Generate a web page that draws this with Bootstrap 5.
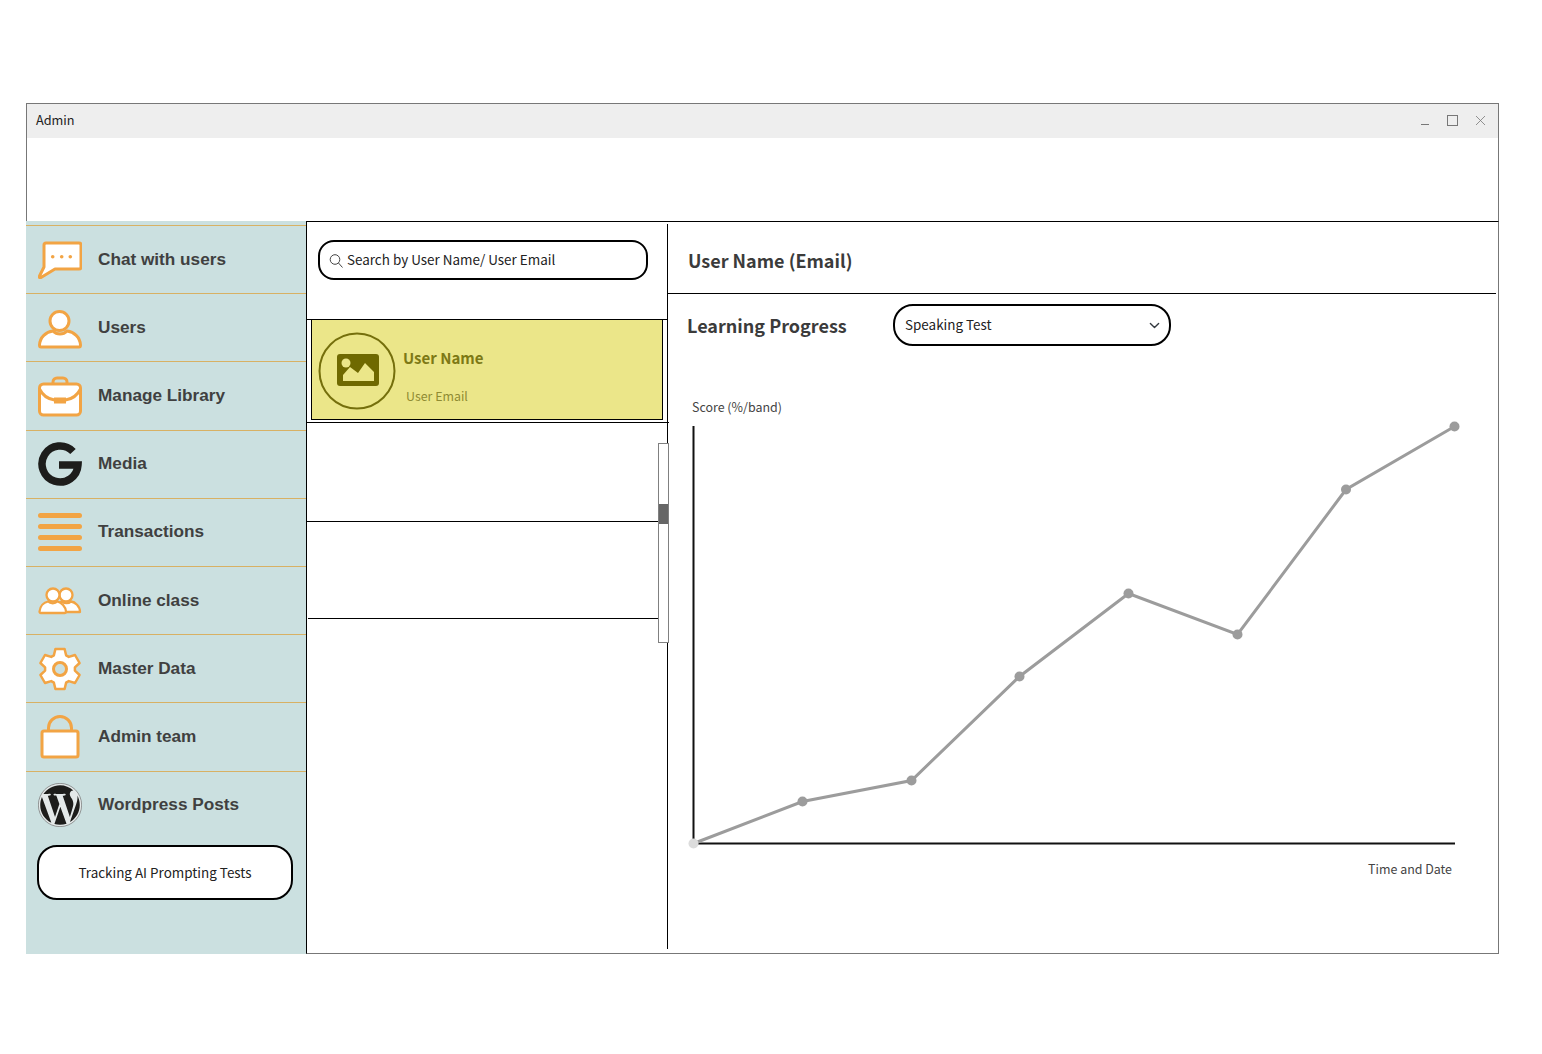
<!DOCTYPE html>
<html lang="en">
<head>
	<meta charset="UTF-8" />
	<meta name="viewport" content="width=device-width, initial-scale=1.0" />
	<title>Admin</title>
	<link href="https://cdn.jsdelivr.net/npm/bootstrap@5.3.3/dist/css/bootstrap.min.css" rel="stylesheet" />
	<script src="https://cdn.jsdelivr.net/npm/bootstrap@5.3.3/dist/js/bootstrap.bundle.min.js"></script>

	<style>
		body {
			background: #fff;
			font-family: "Noto Sans CJK SC", "Noto Sans", sans-serif;
			color: #222;
		}

		.app-window {
			width: 1473px;
			margin: 103px 0 0 26px;
		}

		.win-top {
			height: 118px;
			border: 1px solid #777;
			border-bottom: 0;
		}

		.win-title {
			height: 34px;
			background: #eeeeee;
			padding: 0 8px 2px 9px;
			font-size: 12.7px;
			color: #222;
		}

		.win-btns svg {
			display: block;
			margin-top: 2px;
		}

		.win-main {
			height: 733px;
		}

		/* sidebar */
		.side-col {
			width: 280px;
			flex: none;
			background: #cbe0e0;
			padding-top: 4px;
		}

		.side-col .list-group-item {
			height: 68.2px;
			background: transparent;
			border: 0;
			border-top: 1.5px solid #d8b164;
			border-radius: 0;
			padding: 0 0 0 12px;
			gap: 16px;
			font-family: "Liberation Sans", Arial, sans-serif;
			font-weight: 700;
			font-size: 17.2px;
			color: #404040;
		}

		.side-icon {
			width: 44px;
			height: 44px;
			flex: none;
		}

		.track-btn {
			display: block;
			width: 256px;
			height: 55px;
			margin: 6px 0 0 11px;
			background: #fff;
			border: 2px solid #000;
			border-radius: 20px;
			font-size: 13.45px;
			color: #222;
		}

		/* content frame */
		.content-frame {
			border-top: 1px solid #000;
			border-left: 1px solid #000;
			border-right: 1px solid #777;
			border-bottom: 1px solid #777;
		}

		/* user list */
		.user-col {
			width: 361px;
			flex: none;
			margin: 2px 0 4px;
			border-right: 1px solid #000;
		}

		.search-wrap {
			height: 96px;
			padding: 16px 0 0 11px;
			border-bottom: 1px solid #000;
			margin-right: -1px;
		}

		.search-box {
			width: 330px;
			height: 40px;
			border: 2px solid #000;
			border-radius: 16px;
			padding-left: 9px;
			gap: 4px;
			font-size: 13.45px;
			color: #222;
		}

		.search-text {
			margin-top: -2px;
		}

		.user-active {
			width: 352px;
			height: 100px;
			margin-left: 4px;
			background: #ebe689;
			border: 1px solid #000;
			border-top: 0;
			padding-left: 6px;
			color: #7d7915;
		}

		.avatar-ring {
			width: 78px;
			height: 78px;
			flex: none;
			margin-top: 2px;
		}

		.user-name {
			font-size: 15px;
			font-weight: 700;
			margin: 11px 0 0 7px;
			line-height: 24px;
		}

		.user-mail {
			font-size: 12.4px;
			margin: 17px 0 0 10px;
			line-height: 18px;
			color: #8f8b32;
		}

		.user-row {
			border-bottom: 1px solid #000;
		}

		.user-row-first {
			height: 100px;
			margin: 2px -2px 0 -1px;
			border-top: 1px solid #000;
		}

		.user-row-second {
			height: 97px;
			margin: 0 0 0 1px;
		}

		.list-scroll {
			position: absolute;
			top: 219px;
			right: -2px;
			width: 11px;
			height: 200px;
			background: #fff;
			border: 1px solid #808080;
		}

		.list-scroll-thumb {
			height: 20px;
			margin-top: 60px;
			background: #666;
		}

		/* detail panel */
		.detail-head {
			height: 72px;
			margin-right: 2px;
			padding: 6px 0 0 20px;
			border-bottom: 1px solid #000;
			font-size: 18px;
			font-weight: 700;
			color: #3b3b3b;
		}

		.progress-row {
			padding: 10px 0 0 19px;
		}

		.progress-title {
			width: 206px;
			font-size: 18px;
			font-weight: 700;
			color: #3b3b3b;
			line-height: 24px;
			padding-top: 9px;
		}

		.test-select {
			width: 278px;
			height: 42px;
			border: 2px solid #000;
			border-radius: 20px;
			padding: 0 36px 2px 10px;
			font-size: 13.45px;
			color: #222;
			background-size: 11px 11px;
			background-position: right 9.5px center;
		}

		.chart-svg {
			display: block;
			margin-top: 44px;
		}

		.chart-svg text {
			font-family: "Noto Sans CJK SC", "Noto Sans", sans-serif;
			font-size: 12.45px;
			fill: #444;
		}
	</style>
</head>
<body>

	<div class="app-window">

		<div class="win-top">
			<div class="win-title d-flex align-items-center justify-content-between">
				<span>Admin</span>
				<div class="win-btns d-flex align-items-center">
					<svg width="70" height="14" viewBox="0 0 70 14" fill="none" stroke="#777">
						<path d="M1 10.5h8" />
						<rect x="27.5" y="1.5" width="10" height="10" />
						<path d="M56 2l9 9M65 2l-9 9" stroke-width=".8" />
					</svg>
				</div>
			</div>
		</div>

		<div class="win-main d-flex">

			<div class="side-col">
				<div class="list-group">
					<a class="list-group-item d-flex align-items-center">
						<svg class="side-icon" viewBox="0 0 44 44" fill="#fff" stroke="#f2a444" stroke-width="3" stroke-linejoin="round">
							<path d="M8 5h33a2 2 0 0 1 2 2v22a2 2 0 0 1-2 2H17L3 39.500Q.5 40 1.500 38L6 29V7a2 2 0 0 1 2-2z" />
							<g fill="#f2a444" stroke="none"><circle cx="14.700" cy="18.700" r="1.800" /><circle cx="23.700" cy="18.700" r="1.800" /><circle cx="32.300" cy="18.700" r="1.800" /></g>
						</svg>
						Chat with users
					</a>
					<a class="list-group-item d-flex align-items-center">
						<svg class="side-icon" viewBox="0 0 44 44" fill="#fff" stroke="#f2a444" stroke-width="3" stroke-linejoin="round">
							<path d="M3 41q-1.500 0-1.500-2C2 31 8 26 15 25a9.500 9.500 0 0 0 14 0c7 1 13 6 13.500 14 0 1.500-.5 2-1.500 2z" />
							<circle cx="21.500" cy="15" r="9.500" />
						</svg>
						Users
					</a>
					<a class="list-group-item d-flex align-items-center">
						<svg class="side-icon" viewBox="0 0 44 44" fill="#fff" stroke="#f2a444" stroke-width="3" stroke-linejoin="round">
							<path d="M15 10V8a4 4 0 0 1 4-4h6a4 4 0 0 1 4 4v2" fill="none" />
							<rect x="1.500" y="10" width="41" height="31" rx="4" />
							<path d="M1.500 15c3 6 8 10 15 11h11c7-1 12-5 15-11" fill="none" />
							<rect x="16" y="23.500" width="12" height="6" fill="#f2a444" stroke="none" />
						</svg>
						Manage Library
					</a>
					<a class="list-group-item d-flex align-items-center">
						<svg class="side-icon" viewBox="0 0 44 44" fill="none" stroke="#1d1d1b" stroke-width="7.500">
							<path d="M35 9.500A18 18 0 1 0 40 23H21" />
						</svg>
						Media
					</a>
					<a class="list-group-item d-flex align-items-center">
						<svg class="side-icon" viewBox="0 0 44 44" fill="none" stroke="#f2a444" stroke-width="5" stroke-linecap="round">
							<path d="M2.500 5.500h39M2.500 16.500h39M2.500 27.500h39M2.500 38.500h39" />
						</svg>
						Transactions
					</a>
					<a class="list-group-item d-flex align-items-center">
						<svg class="side-icon" viewBox="0 0 44 44" fill="#fff" stroke="#f2a444" stroke-width="2.300" stroke-linejoin="round">
							<circle cx="28" cy="16" r="6.500" />
							<path d="M20 33h22c0-6-5-10-9-10.500a7 7 0 0 1-9 0c-1.500.5-3 1-4 2z" />
							<path d="M3 34q-1.500 0-1.500-1.500C2 27 6 23.500 10 22.500a7 7 0 0 0 9.500 0c4 1 8 5 8.500 10 0 1-.5 1.500-1.500 1.500z" />
							<circle cx="15" cy="16" r="6.500" />
						</svg>
						Online class
					</a>
					<a class="list-group-item d-flex align-items-center">
						<svg class="side-icon" viewBox="0 0 44 44" fill="#fff" stroke="#f2a444" stroke-width="2.500" stroke-linejoin="round">
							<path d="M15.900 8.300L17.400 2H26.600L28.100 8.300L30.800 9.900L37 8L41.600 16L36.900 20.400V23.600L41.600 28L37 36L30.800 34.100L28.100 35.700L26.600 42H17.400L15.900 35.700L13.200 34.100L7 36L2.400 28L7.100 23.600V20.400L2.400 16L7 8L13.200 9.900z" />
							<circle cx="22" cy="22" r="6.500" fill="#cbe0e0" stroke-width="3" />
						</svg>
						Master Data
					</a>
					<a class="list-group-item d-flex align-items-center">
						<svg class="side-icon" viewBox="0 0 44 44" fill="#fff" stroke="#f2a444" stroke-width="3" stroke-linejoin="round">
							<path d="M10.500 16V13a11.500 11.500 0 0 1 23 0v3" fill="none" />
							<rect x="4" y="16" width="36" height="26" rx="2" />
						</svg>
						Admin team
					</a>
					<a class="list-group-item d-flex align-items-center">
						<svg class="side-icon" viewBox="0 0 24 24">
							<circle cx="12" cy="12" r="11.800" fill="#e4e9e9" stroke="#777" stroke-width=".4" />
							<path fill="#1d1d1b" d="M21.469 6.825c.84 1.537 1.318 3.3 1.318 5.175 0 3.979-2.156 7.456-5.363 9.325l3.295-9.527c.615-1.54.82-2.771.82-3.864 0-.405-.026-.78-.07-1.11m-7.981.105c.647-.03 1.232-.105 1.232-.105.582-.075.514-.93-.067-.899 0 0-1.755.135-2.88.135-1.064 0-2.85-.15-2.85-.15-.585-.03-.661.855-.075.885 0 0 .54.061 1.125.09l1.68 4.605-2.37 7.08L5.354 6.9c.649-.03 1.234-.1 1.234-.1.585-.075.516-.93-.065-.896 0 0-1.746.138-2.874.138-.2 0-.438-.008-.69-.015C4.911 3.15 8.235 1.215 12 1.215c2.809 0 5.365 1.072 7.286 2.833-.046-.003-.091-.009-.141-.009-1.06 0-1.812.923-1.812 1.914 0 .89.513 1.643 1.06 2.531.411.72.89 1.643.89 2.977 0 .915-.354 1.994-.821 3.479l-1.075 3.585-3.9-11.61.001.014zM12 22.784c-1.059 0-2.081-.153-3.048-.437l3.237-9.406 3.315 9.087c.024.053.05.101.078.149-1.12.393-2.325.609-3.582.609M1.211 12c0-1.564.336-3.05.935-4.39L7.29 21.709C3.694 19.96 1.212 16.271 1.211 12" />
						</svg>
						Wordpress Posts
					</a>
				</div>
				<button type="button" class="btn track-btn p-0">Tracking AI Prompting Tests</button>
			</div>

			<div class="content-frame d-flex flex-grow-1">

				<div class="user-col position-relative">
					<div class="search-wrap">
						<div class="search-box d-flex align-items-center">
							<svg width="14" height="15" viewBox="0 0 14 15" fill="none" stroke="#444">
								<circle cx="6" cy="6.500" r="4.800" />
								<path d="M9.500 10l4 4.500" />
							</svg>
							<span class="search-text">Search by User Name/ User Email</span>
						</div>
					</div>

					<div class="user-active d-flex align-items-center">
						<svg class="avatar-ring" viewBox="0 0 78 78">
							<circle cx="39" cy="39" r="37.500" fill="none" stroke="#756f0c" stroke-width="2" />
							<rect x="19" y="22" width="42" height="32" rx="3" fill="#6f6900" />
							<circle cx="28" cy="31" r="4.500" fill="#ebe689" />
							<path d="M25 49V43L32 35L40 41L47 31L56 40V49z" fill="#ebe689" />
						</svg>
						<div>
							<div class="user-name">User Name</div>
							<div class="user-mail">User Email</div>
						</div>
					</div>

					<div class="user-row user-row-first"></div>
					<div class="user-row user-row-second"></div>

					<div class="list-scroll">
						<div class="list-scroll-thumb"></div>
					</div>
				</div>

				<div class="flex-grow-1">
					<div class="detail-head d-flex align-items-center">User Name (Email)</div>

					<div class="progress-row d-flex">
						<div class="progress-title">Learning Progress</div>
						<select class="form-select test-select" aria-label="Test type">
							<option>Speaking Test</option>
						</select>
					</div>

					<svg class="chart-svg" width="828" height="510" viewBox="668 390 828 510">
						<text x="692" y="412">Score (%/band)</text>
						<path d="M693.500 426V844M693 843.500H1455" fill="none" stroke="#111" stroke-width="2" />
						<polyline points="693.500,843.500 802.500,801.500 911.500,780.500 1019.500,676.500 1128.500,593.500 1237.500,634.500 1346,489.500 1454.500,426.500" fill="none" stroke="#9c9c9c" stroke-width="3" />
						<g fill="#9c9c9c">
							<circle cx="693.500" cy="843.500" r="5" fill="#dcdcdc" />
							<circle cx="802.500" cy="801.500" r="5" />
							<circle cx="911.500" cy="780.500" r="5" />
							<circle cx="1019.500" cy="676.500" r="5" />
							<circle cx="1128.500" cy="593.500" r="5" />
							<circle cx="1237.500" cy="634.500" r="5" />
							<circle cx="1346" cy="489.500" r="5" />
							<circle cx="1454.500" cy="426.500" r="5" />
						</g>
						<text x="1452" y="874" text-anchor="end">Time and Date</text>
					</svg>
				</div>

			</div>
		</div>

	</div>

</body>
</html>
